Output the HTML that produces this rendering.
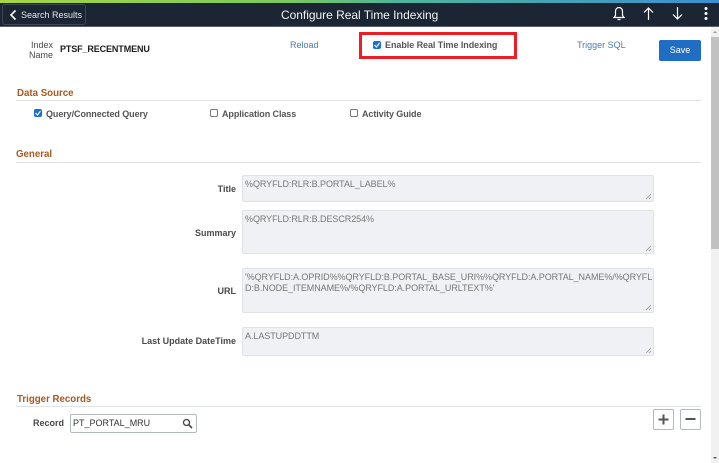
<!DOCTYPE html>
<html><head><meta charset="utf-8">
<style>
html,body{margin:0;padding:0;background:#fff;}
body{width:719px;height:463px;overflow:hidden;position:relative;font-family:"Liberation Sans",sans-serif;font-size:9px;color:#444;}
.a{position:absolute;white-space:nowrap;line-height:12px;}
.lbl{font-weight:bold;color:#4a4a4a;text-align:right;}
.h{font-weight:bold;color:#a8591f;font-size:9.7px;}
.ln{position:absolute;height:1px;background:#dfe3e6;}
.ta{position:absolute;box-sizing:border-box;background:#f0f1f4;border:1px solid #dfe2e6;border-radius:2px;left:242px;width:412px;color:#777;font-size:9px;line-height:12px;padding:2px 2px 0;white-space:nowrap;letter-spacing:-.06px;}
.ta svg{position:absolute;right:1px;bottom:1px;}
.cb{position:absolute;box-sizing:border-box;width:8px;height:8px;border-radius:2px;}
.off{background:#fff;border:1px solid #777;}
.on{background:#1a6fd0;}
.lk{color:#4a7cb8;}
.b{font-weight:bold;color:#555;letter-spacing:-.08px;}
</style></head><body>
<div style="position:absolute;left:0;top:0;width:719px;height:3px;background:linear-gradient(90deg,#a8d63f 0%,#7cc860 40%,#4fb59a 55%,#3d8fd0 100%)"></div>
<div style="position:absolute;left:0;top:3px;width:719px;height:24px;background:#1b2533;border-bottom:1px solid #596069;box-sizing:border-box"></div>
<div style="position:absolute;left:2px;top:4px;width:84px;height:21px;box-sizing:border-box;border:1px solid #3d4652;border-radius:3px"></div>
<svg style="position:absolute;left:9px;top:9px" width="8" height="12"><path d="M6.500 1.500L2 6l4.500 4.500" fill="none" stroke="#fff" stroke-width="1.600"/></svg>
<div class="a" style="left:21px;top:9px;color:#e6e8ea;font-size:9px">Search Results</div>
<div class="a" style="left:281px;top:8px;color:#f2f3f4;font-size:12px;line-height:14px;letter-spacing:-.03px">Configure Real Time Indexing</div>
<svg style="position:absolute;left:612px;top:5px" width="14" height="16"><path d="M2 12.500h10l-1.500-2V6.500C10.500 4 9 2.500 7 2.500S3.500 4 3.500 6.500v4zM5.500 14.500h3" fill="none" stroke="#fff" stroke-width="1.200"/></svg>
<svg style="position:absolute;left:642px;top:6px" width="13" height="15"><path d="M6.500 14V2M2 6.500L6.500 2 11 6.500" fill="none" stroke="#fff" stroke-width="1.200"/></svg>
<svg style="position:absolute;left:671px;top:6px" width="13" height="15"><path d="M6.500 1v12M2 8.500L6.500 13 11 8.500" fill="none" stroke="#fff" stroke-width="1.200"/></svg>
<svg style="position:absolute;left:703px;top:6px" width="6" height="15"><circle cx="3" cy="2.500" r="1.500" fill="#fff"/><circle cx="3" cy="7.500" r="1.500" fill="#fff"/><circle cx="3" cy="12.500" r="1.500" fill="#fff"/></svg>

<div class="a" style="left:711px;top:27px;width:8px;height:436px;background:#f1f1f1"></div>
<div class="a" style="left:711px;top:37px;width:8px;height:212px;background:#c1c1c1"></div>
<svg style="position:absolute;left:711px;top:29px" width="8" height="6"><path d="M2 4h4L4 2z" fill="#999"/></svg>
<svg style="position:absolute;left:711px;top:455px" width="8" height="6"><path d="M2 2h4L4 4z" fill="#555"/></svg>

<div class="a lbl" style="left:20px;top:40px;width:33px;font-weight:normal;line-height:10px;">Index<br>Name</div>
<div class="a" style="left:60px;top:43px;font-weight:bold;color:#1c1c1c;letter-spacing:-.12px">PTSF_RECENTMENU</div>
<div class="a lk" style="left:290px;top:39px">Reload</div>
<div style="position:absolute;left:359px;top:32px;width:158px;height:27px;box-sizing:border-box;border:3px solid #ee1c25"></div>
<div class="cb on" style="left:373px;top:41px"></div>
<svg style="position:absolute;left:373px;top:41px" width="8" height="8"><path d="M1.500 4l2 2 3-4" fill="none" stroke="#fff" stroke-width="1.200"/></svg>
<div class="a b" style="left:385px;top:39px;letter-spacing:-.06px">Enable Real Time Indexing</div>
<div class="a lk" style="left:577px;top:39px">Trigger SQL</div>
<div class="a" style="left:659px;top:40px;width:42px;height:21px;background:#1f6ec4;border-radius:2px;color:#fff;text-align:center;line-height:20px">Save</div>

<div class="a h" style="left:17px;top:88px">Data Source</div>
<div class="ln" style="left:16px;top:100px;width:685px"></div>
<div class="cb on" style="left:34px;top:109px"></div>
<svg style="position:absolute;left:34px;top:109px" width="8" height="8"><path d="M1.500 4l2 2 3-4" fill="none" stroke="#fff" stroke-width="1.200"/></svg>
<div class="a b" style="left:46px;top:108px">Query/Connected Query</div>
<div class="cb off" style="left:210px;top:109px"></div>
<div class="a b" style="left:222px;top:108px">Application Class</div>
<div class="cb off" style="left:350px;top:109px"></div>
<div class="a b" style="left:362px;top:108px">Activity Guide</div>

<div class="a h" style="left:16px;top:149px">General</div>
<div class="ln" style="left:16px;top:162px;width:685px"></div>

<div class="a lbl" style="left:206px;top:183px;width:30px">Title</div>
<div class="ta" style="top:175px;height:27px">%QRYFLD:RLR:B.PORTAL_LABEL%<svg width="7" height="7"><path d="M1 6L6 1M4 6L6 4" stroke="#888" stroke-width=".7"/></svg></div>
<div class="a lbl" style="left:180px;top:227px;width:56px">Summary</div>
<div class="ta" style="top:210px;height:44px">%QRYFLD:RLR:B.DESCR254%<svg width="7" height="7"><path d="M1 6L6 1M4 6L6 4" stroke="#888" stroke-width=".7"/></svg></div>
<div class="a lbl" style="left:200px;top:285px;width:36px">URL</div>
<div class="ta" style="top:268px;height:45px;padding-top:3px;line-height:11px">'%QRYFLD:A.OPRID%%QRYFLD:B.PORTAL_BASE_URI%%QRYFLD:A.PORTAL_NAME%/%QRYFL<br>D:B.NODE_ITEMNAME%/%QRYFLD:A.PORTAL_URLTEXT%'<svg width="7" height="7"><path d="M1 6L6 1M4 6L6 4" stroke="#888" stroke-width=".7"/></svg></div>
<div class="a lbl" style="left:120px;top:335px;width:116px">Last Update DateTime</div>
<div class="ta" style="top:327px;height:29px">A.LASTUPDDTTM<svg width="7" height="7"><path d="M1 6L6 1M4 6L6 4" stroke="#888" stroke-width=".7"/></svg></div>

<div class="a h" style="left:17px;top:394px">Trigger Records</div>
<div class="ln" style="left:16px;top:406px;width:685px"></div>
<div class="a lbl" style="left:30px;top:417px;width:34px">Record</div>
<div style="position:absolute;left:70px;top:414px;width:127px;height:19px;box-sizing:border-box;border:1px solid #b4b9bf;border-radius:2px;background:#fff"></div>
<div class="a" style="left:73px;top:417px;color:#333">PT_PORTAL_MRU</div>
<svg style="position:absolute;left:182px;top:418px" width="11" height="11"><circle cx="4.500" cy="4.500" r="3" fill="none" stroke="#444" stroke-width="1.300"/><path d="M6.800 6.800L10 10" stroke="#444" stroke-width="1.600"/></svg>
<div style="position:absolute;left:653px;top:409px;width:21px;height:21px;box-sizing:border-box;border:1px solid #b4b9bf;border-radius:2px"></div>
<svg style="position:absolute;left:653px;top:409px" width="21" height="21"><path d="M10.500 5.500v10M5.500 10.500h10" stroke="#555" stroke-width="2"/></svg>
<div style="position:absolute;left:680px;top:409px;width:21px;height:21px;box-sizing:border-box;border:1px solid #b4b9bf;border-radius:2px"></div>
<svg style="position:absolute;left:680px;top:409px" width="21" height="21"><path d="M5.500 10h10" stroke="#555" stroke-width="2"/></svg>
</body></html>
